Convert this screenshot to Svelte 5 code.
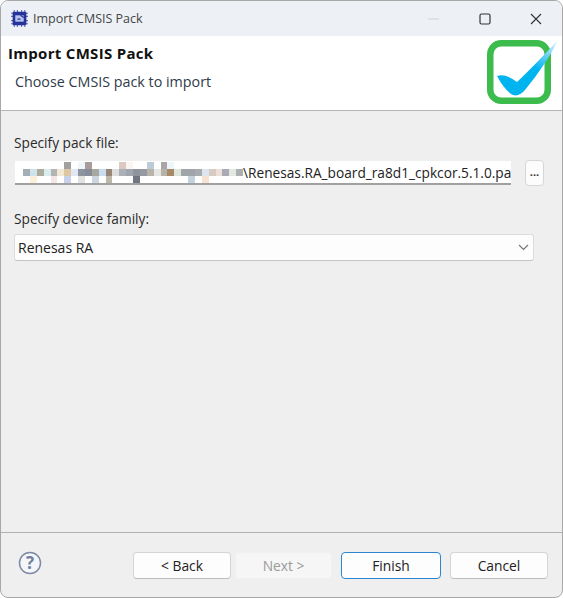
<script>
  const rows = [
    ['#fff','#fff','#fff','#fff','#fff','#fff','#a0a0a0','#fff','#eef6fb','#a89c9c','#fff','#fff','#fff','#fff','#dcc9c2','#faf5ee','#fff','#fff','#bccbd8','#fff','#aaa4a4','#eef6fb','#fff','#fff','#fff','#fff','#fff','#fff','#fff','#fff','#fff','#fff'],
    ['#a5adb5','#cfe3ee','#aeaa9c','#d8eeee','#b5b3b3','#efe8d4','#dfc6a3','#e0e6f5','#8d939f','#868c98','#a8a8a0','#c8def0','#9a8678','#dedede','#adb0b8','#a0a5ae','#8f939c','#959aa2','#b8b4ac','#e6e6e6','#b5b2aa','#a68a68','#dde5dd','#9fa5a8','#a0a5ab','#a8abb0','#dfe5ee','#d6ccc4','#eee0d8','#a9a9b8','#e4e8de','#a8b0b0'],
    ['#fff','#fdeed9','#fff','#fff','#f3e6e4','#fff','#c6d0e8','#fff','#e0e2e0','#fff','#ccd6e3','#fff','#bdb8a9','#fff','#fff','#fff','#6f7680','#fff','#fff','#fff','#fff','#fff','#fff','#fff','#c4d2de','#fff','#f6e2cf','#fff','#fff','#fff','#fff','#fff']
  ];
  const cells = rows.flat();
</script>

<div class="window">
  <div class="titlebar">
    <svg class="appicon" viewBox="0 0 18 18" width="19" height="19">
      <path d="M4 1v16M7 1v16M11 1v16M14 1v16M1 4h16M1 7h16M1 11h16M1 14h16" stroke="#5a63b5" stroke-width="1"/>
      <rect x="2.500" y="2.500" width="13" height="13" rx="1" fill="#26349a"/>
      <rect x="5" y="6" width="8" height="6" fill="#b8c4ee"/>
      <path d="M7 9.500h3M10 6l3 2" stroke="#26349a" stroke-width="1.200" fill="none"/>
    </svg>
    <span class="wintitle">Import CMSIS Pack</span>
    <div class="winctl">
      <svg width="12" height="12" viewBox="0 0 12 12"><path d="M0 6h11" stroke="#cfd2d6" stroke-width="1"/></svg>
      <svg width="12" height="12" viewBox="0 0 12 12"><rect x="1" y="1" width="10" height="10" rx="1.500" fill="none" stroke="#333" stroke-width="1.200"/></svg>
      <svg width="12" height="12" viewBox="0 0 12 12"><path d="M1 1l10 10M11 1L1 11" stroke="#333" stroke-width="1.100"/></svg>
    </div>
  </div>

  <header class="banner">
    <div class="bannertext">
      <h1>Import CMSIS Pack</h1>
      <p>Choose CMSIS pack to import</p>
    </div>
    <svg class="logo" width="72" height="70" viewBox="0 0 72 70">
      <defs>
        <linearGradient id="chk" x1="0.35" y1="0.8" x2="1" y2="0">
          <stop offset="0.4" stop-color="#00b4f0"/>
          <stop offset="0.72" stop-color="#7dd4f5"/>
          <stop offset="1" stop-color="#e8f8fe"/>
        </linearGradient>
      </defs>
      <rect x="3.250" y="4.250" width="57.500" height="57.500" rx="11" fill="#fff" stroke="#3cbc4c" stroke-width="6.500"/>
      <path d="M10 37 Q18 34 30 43 Q46 28 71 1 Q60 24 38 51 Q32 58 26 56 Q18 52 10 37Z" fill="url(#chk)"/>
    </svg>
  </header>

  <main class="content">
    <label class="lbl first" for="packfile">Specify pack file:</label>
    <div class="filerow">
      <div class="filefield" id="packfile">
        <div class="mosaic">
          {#each cells as c}<i style="background:{c}"></i>{/each}
        </div>
        <span class="path">\Renesas.RA_board_ra8d1_cpkcor.5.1.0.pa</span>
      </div>
      <button class="browse">...</button>
    </div>
    <label class="lbl second" for="family">Specify device family:</label>
    <div class="combo" id="family">
      <span>Renesas RA</span>
      <svg width="11" height="7" viewBox="0 0 11 7"><path d="M1 1l4.500 4.500L10 1" fill="none" stroke="#777" stroke-width="1.200"/></svg>
    </div>
  </main>

  <footer class="footer">
    <svg class="help" width="24" height="24" viewBox="0 0 24 24">
      <circle cx="12" cy="12" r="10.500" fill="#f4f6f9" stroke="#7d8ba6" stroke-width="1.500"/>
      <text x="12" y="18" text-anchor="middle" class="q">?</text>
    </svg>
    <div class="buttons">
      <button class="btn back">&lt; Back</button>
      <button class="btn next" disabled>Next &gt;</button>
      <button class="btn finish">Finish</button>
      <button class="btn cancel">Cancel</button>
    </div>
  </footer>
</div>

<style>
  :global(body) { margin: 0; background: #fff; }
  .window {
    width: 563px; height: 598px; box-sizing: border-box;
    display: flex; flex-direction: column;
    background: #efefef;
    border: 1px solid #a8a8a8; border-radius: 8px;
    overflow: hidden;
    font-family: "Open Sans", "Noto Sans", sans-serif;
    font-size: 13.700px; color: #222;
  }
  .titlebar {
    height: 35px; flex: none; box-sizing: border-box;
    display: flex; align-items: center;
    background: #edf1f6; padding-left: 9px;
  }
  .appicon { margin-right: 4px; }
  .wintitle { font-size: 12.500px; color: #444; }
  .winctl { margin-left: auto; display: flex; gap: 39px; padding-right: 20px; align-items: center; }
  .banner {
    height: 75px; flex: none; box-sizing: border-box;
    display: flex; justify-content: space-between;
    background: #fff; border-bottom: 1px solid #b4b4b4;
  }
  .bannertext { padding: 8px 0 0 7px; }
  h1 { margin: 0; font-size: 15px; letter-spacing: 0.300px; font-weight: 700; color: #111; line-height: 19px; }
  p { margin: 10px 0 0 7px; font-size: 14.300px; color: #2f3b4a; line-height: 18px; }
  .logo { margin: 3px 3px 0 0; }
  .content {
    flex: 1; padding: 0 18px 0 12px; min-height: 0;
    border-bottom: 1px solid #b0b0b0;
  }
  .lbl { display: block; line-height: 18px; color: #2a2a2a; padding-left: 1px; }
  .first { margin-top: 23px; }
  .second { margin-top: 24px; }
  .filerow { display: flex; align-items: center; margin-top: 8px; }
  .filefield {
    width: 496px; height: 24px; flex: none; box-sizing: border-box;
    margin-left: 2px;
    display: flex; align-items: center;
    background: #fff; border-bottom: 2px solid #a0a0a0;
    padding: 0 0 0 8px;
  }
  .mosaic {
    flex: none; display: grid; width: 220px;
    grid-template-columns: repeat(32, 1fr);
    grid-auto-rows: 7px;
  }
  .mosaic i { display: block; }
  .path { white-space: nowrap; font-size: 13.700px; color: #222; }
  .browse {
    margin-left: 14px; width: 20px; height: 26px; padding: 0 0 4px; box-sizing: border-box;
    background: #fcfcfc; border: 1px solid #d6d6d6; border-radius: 4px;
    font: 700 11px "Open Sans", sans-serif; color: #333;
  }
  .combo {
    margin-top: 6px; width: 520px; height: 27px; box-sizing: border-box; margin-left: 1px;
    display: flex; align-items: center; justify-content: space-between;
    background: #fdfdfd; border: 1px solid #dcdcdc; border-bottom-color: #c4c4c4; border-radius: 3px;
    padding: 0 4px 0 3px; font-size: 14px;
  }
  .footer {
    height: 64px; flex: none; box-sizing: border-box;
    display: flex; justify-content: space-between;
    padding: 19px 14px 0 17px;
  }
  .help { margin-top: -1px; }
  .q { font: 700 17px "Open Sans", sans-serif; fill: #6e7f9c; }
  .buttons { display: flex; gap: 4px; }
  .btn {
    height: 27px; padding: 0; box-sizing: border-box;
    background: #fdfdfd; border: 1px solid #d4d4d4; border-bottom-color: #bdbdbd; border-radius: 4px;
    font: 13.800px "Open Sans", sans-serif; color: #222;
  }
  .back { width: 98px; }
  .next { width: 97px; background: #f6f6f6; border-color: #f0f0f0; color: #9a9a9a; }
  .finish { width: 100px; margin-left: 5px; border: 1.500px solid #2a86d0; }
  .cancel { width: 98px; margin-left: 5px; }
</style>
